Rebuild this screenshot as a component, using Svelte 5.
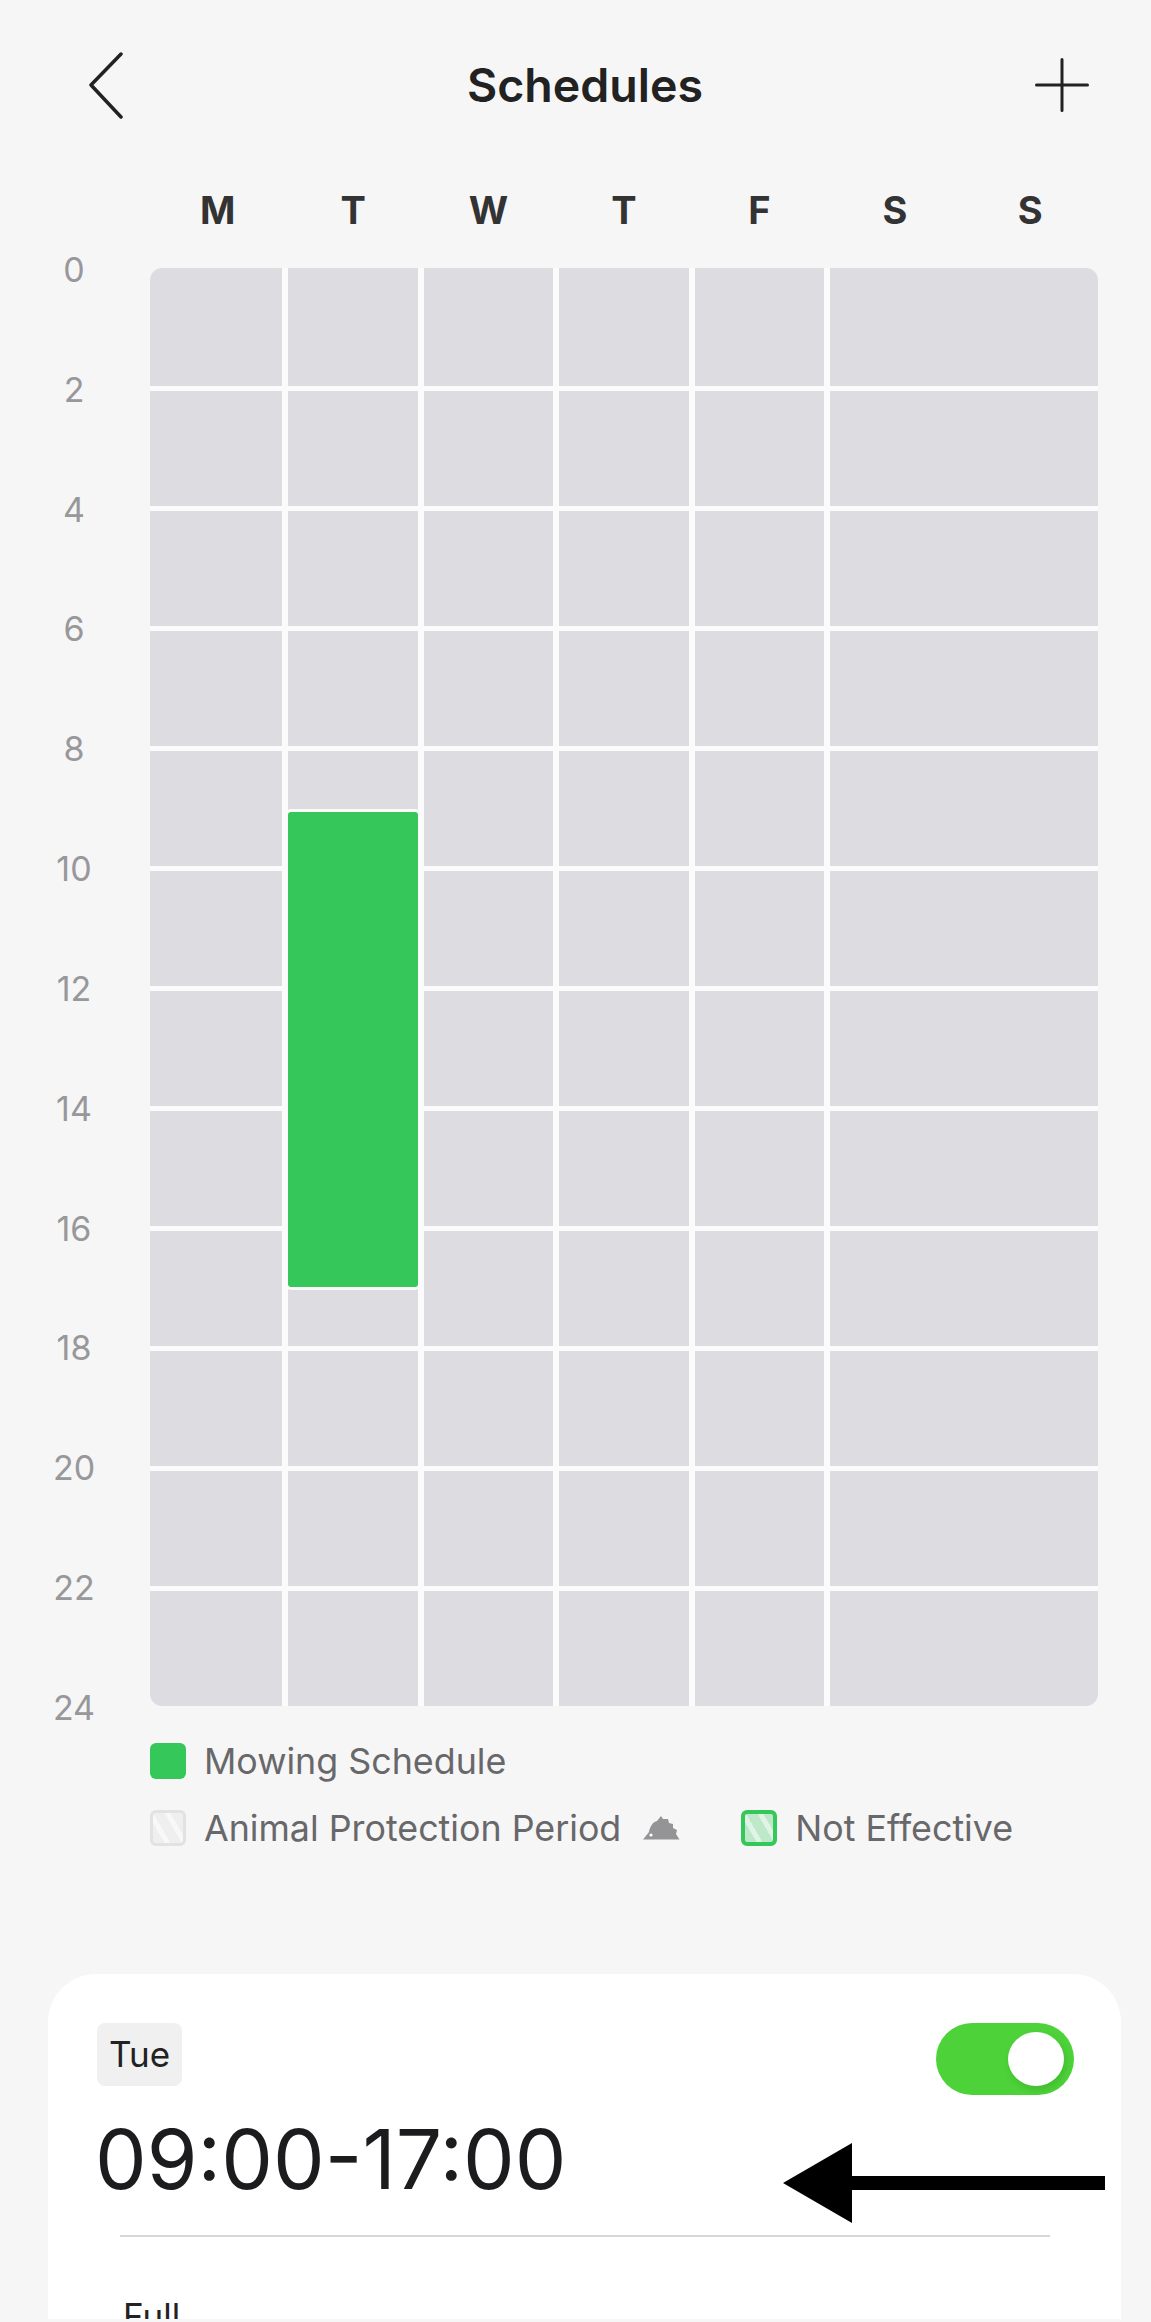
<script>
	const days = ['M', 'T', 'W', 'T', 'F', 'S', 'S'];
	const hours = [0, 2, 4, 6, 8, 10, 12, 14, 16, 18, 20, 22, 24];
	const cells = Array.from({ length: 72 }, (_, i) => i);
</script>

<div class="page">
	<header class="topbar">
		<svg class="back" width="36" height="67" viewBox="0 0 36 67" fill="none" stroke="#222" stroke-width="3.5" stroke-linecap="round" stroke-linejoin="round" aria-hidden="true">
			<polyline points="33,2 3,33 33,65"></polyline>
		</svg>
		<h1>Schedules</h1>
		<svg class="add" width="54" height="54" viewBox="0 0 54 54" fill="none" stroke="#222" stroke-width="3" stroke-linecap="round" aria-hidden="true">
			<path d="M27 1.5v51M1.5 27h51"></path>
		</svg>
	</header>

	<div class="days">
		{#each days as day}
			<span>{day}</span>
		{/each}
	</div>

	<section class="calendar">
		<div class="hours">
			{#each hours as hour}
				<span>{hour}</span>
			{/each}
		</div>
		<div class="grid-wrap">
			<div class="grid">
				{#each cells as cell (cell)}
					<div class="cell"></div>
				{/each}
			</div>
			<div class="slot"></div>
		</div>
	</section>

	<div class="legend">
		<div class="legend-row">
			<i class="swatch solid"></i>
			<span>Mowing Schedule</span>
		</div>
		<div class="legend-row">
			<i class="swatch animal"></i>
			<span>Animal Protection Period</span>
			<svg class="hedgehog" width="37" height="24" viewBox="0 0 37 24" aria-hidden="true">
				<path fill="#949496" d="M0 23.5L6 16C7 10 10 6 14 5L18 0L20 3L25 3L26 7L30 8L30 12L34 14L33 18L36.5 23.5Z"></path>
				<circle cx="8" cy="19" r="1.6" fill="#fff"></circle>
			</svg>
			<i class="swatch idle"></i>
			<span>Not Effective</span>
		</div>
	</div>

	<section class="card">
		<div class="card-top">
			<span class="tag">Tue</span>
			<div class="toggle"><i></i></div>
		</div>
		<div class="time">09:00-17:00</div>
		<div class="divider"></div>
		<div class="mode">Full</div>
		<svg class="arrow" width="322" height="80" viewBox="0 0 322 80" aria-hidden="true">
			<path fill="#000" d="M0 40L69 0V33H322V47H69V80Z"></path>
		</svg>
	</section>
</div>

<style>
	:global(body) {
		margin: 0;
		background: #f6f6f7;
	}

	.page {
		height: 2322px;
		display: flex;
		flex-direction: column;
		overflow: hidden;
		background: #f6f6f7;
		font-family: Inter, 'Liberation Sans', sans-serif;
	}

	.topbar {
		display: flex;
		align-items: center;
		height: 66px;
		padding: 52px 62px 0 88px;
	}

	.add {
		flex-shrink: 0;
	}

	h1 {
		flex: 1;
		margin: 0;
		padding-left: 11px;
		text-align: center;
		font-size: 46.5px;
		font-weight: 600;
		color: #222;
	}

	.days {
		display: grid;
		grid-template-columns: repeat(7, 1fr);
		margin: 69px 53px 0 150px;
		font-size: 38px;
		font-weight: 700;
		line-height: 46px;
		color: #333;
		text-align: center;
	}

	.calendar {
		display: flex;
		margin: 35px 53px 0 0;
	}

	.hours {
		width: 150px;
		height: 1474px;
		margin: -16px 0;
		display: flex;
		flex-direction: column;
		justify-content: space-between;
		font-size: 34px;
		line-height: 36px;
		color: #98989a;
		text-align: center;
		box-sizing: border-box;
		padding-right: 2px;
	}

	.grid-wrap {
		position: relative;
		flex: 1;
	}

	.grid {
		display: grid;
		grid-template-columns: 132px repeat(4, 129.5px) 1fr;
		grid-template-rows: 118px repeat(11, 1fr);
		column-gap: 6px;
		row-gap: 5px;
		height: 1438px;
		border-radius: 12px;
		overflow: hidden;
		background: #fbfbfc;
	}

	.cell {
		background: #dddde1;
	}

	.slot {
		position: absolute;
		left: 135px;
		top: 541px;
		width: 136px;
		height: 481px;
		box-sizing: border-box;
		border: 3px solid #fbfbfc;
		border-radius: 6px;
		background: #36c75b;
	}

	.legend {
		display: flex;
		flex-direction: column;
		gap: 31px;
		margin: 33px 0 0 150px;
		font-size: 35.8px;
		line-height: 36px;
		color: #68686a;
	}

	.legend-row {
		display: flex;
		align-items: center;
		height: 36px;
	}

	.legend-row span {
		margin-left: 18px;
		white-space: nowrap;
	}

	.swatch {
		display: block;
		flex-shrink: 0;
		width: 36px;
		height: 36px;
		box-sizing: border-box;
		border-radius: 6px;
	}

	.solid {
		background: #36c75b;
	}

	.animal {
		border: 3px solid #e2e2e4;
		background: repeating-linear-gradient(60deg, #efeff0 0 10px, #f8f8f9 10px 15px);
	}

	.idle {
		margin-left: 61px;
		border: 4px solid #36c75b;
		background: repeating-linear-gradient(60deg, #bde8c9 0 10px, #dff4e5 10px 15px);
	}

	.hedgehog {
		flex-shrink: 0;
		margin-left: 22px;
	}

	.card {
		position: relative;
		flex: 1;
		margin: 128px 30px 3px 48px;
		padding: 49px 47px 0 49px;
		background: #fff;
		border-radius: 48px 48px 0 0;
		overflow: hidden;
	}

	.card-top {
		display: flex;
		justify-content: space-between;
		align-items: flex-start;
	}

	.tag {
		padding: 0 12px;
		height: 63px;
		line-height: 63px;
		border-radius: 8px;
		background: #f0f0f1;
		font-size: 35px;
		color: #222;
	}

	.toggle {
		display: flex;
		align-items: center;
		justify-content: flex-end;
		width: 138px;
		height: 72px;
		padding-right: 10px;
		box-sizing: border-box;
		border-radius: 36px;
		background: #4dd339;
	}

	.toggle i {
		display: block;
		width: 56px;
		height: 54px;
		border-radius: 50%;
		background: #fff;
		box-shadow: 2px 4px 8px rgba(0, 0, 0, 0.12);
	}

	.time {
		margin: 15px 0 0 -2px;
		font-size: 82px;
		line-height: 100px;
		color: #1c1c1e;
		white-space: nowrap;
	}

	.divider {
		height: 2px;
		margin: 25px 24px 0 23px;
		background: #d6d6d8;
	}

	.mode {
		margin: 58px 0 0 26px;
		font-size: 35px;
		line-height: 42px;
		color: #222;
	}

	.arrow {
		position: absolute;
		left: 735px;
		top: 169px;
	}
</style>
